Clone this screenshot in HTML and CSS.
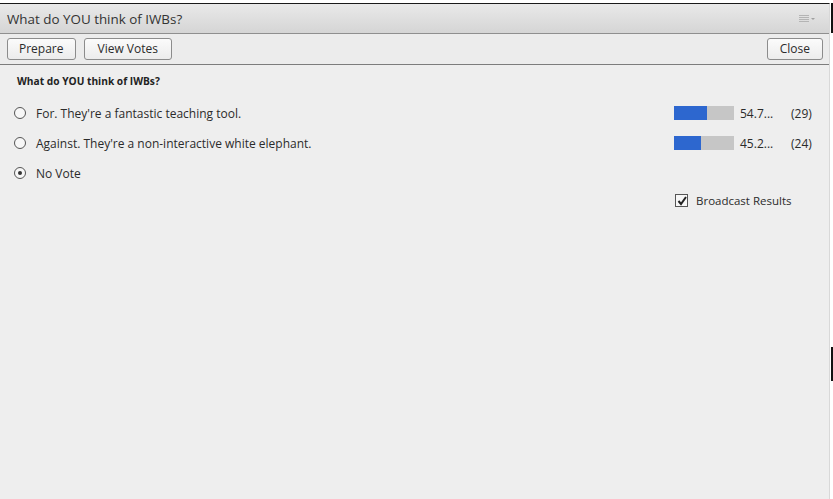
FILE: index.html
```html
<!DOCTYPE html>
<html>
<head>
<meta charset="utf-8">
<link rel="stylesheet" href="styles.css">
</head>
<body>
<div class="topstrip"></div>
<div class="panel">
  <div class="titlebar">
    <span class="title">What do YOU think of IWBs?</span>
    <svg class="menu" width="16" height="8" viewBox="0 0 16 8">
      <rect x="0" y="0" width="10" height="1" fill="#b4b4b4"/>
      <rect x="0" y="2" width="10" height="1" fill="#b4b4b4"/>
      <rect x="0" y="4" width="10" height="1" fill="#b4b4b4"/>
      <rect x="0" y="6" width="10" height="1" fill="#b4b4b4"/>
      <path d="M12 3 L16 3 L14 5 Z" fill="#a0a0a0"/>
    </svg>
  </div>
  <div class="toolbar">
    <div class="group">
      <button class="btn">Prepare</button>
      <button class="btn wide">View Votes</button>
    </div>
    <button class="btn close">Close</button>
  </div>
  <div class="content">
    <div class="question">What do YOU think of IWBs?</div>
    <div class="options">
      <div class="option">
        <span class="radio"></span>
        <span class="label">For. They're a fantastic teaching tool.</span>
        <div class="result">
          <div class="bar"><div class="fill" style="width:54.7%"></div></div>
          <span class="pct">54.7...</span>
          <span class="count">(29)</span>
        </div>
      </div>
      <div class="option">
        <span class="radio"></span>
        <span class="label">Against. They're a non-interactive white elephant.</span>
        <div class="result">
          <div class="bar"><div class="fill" style="width:45.2%"></div></div>
          <span class="pct">45.2...</span>
          <span class="count">(24)</span>
        </div>
      </div>
      <div class="option">
        <span class="radio checked"></span>
        <span class="label">No Vote</span>
      </div>
    </div>
    <div class="broadcast">
      <span class="checkbox">
        <svg width="10" height="10" viewBox="0 0 10 10"><path d="M1.5 5 L4 8 L9 1" fill="none" stroke="#222" stroke-width="2"/></svg>
      </span>
      <span class="blabel">Broadcast Results</span>
    </div>
  </div>
  <div class="edge edge-top"></div>
  <div class="edge edge-mid"></div>
</div>
</body>
</html>
```
FILE: styles.css
```css
html, body {
  margin: 0;
  padding: 0;
  background: #ffffff;
  height: 100%;
  overflow: hidden;
}
body {
  font-family: "Open Sans", "Noto Sans", sans-serif;
  color: #2b2b2b;
}
.topstrip {
  height: 3px;
  background: #ffffff;
}
.panel {
  position: relative;
  width: 829px;
  height: 496px;
  border-top: 1px solid #1a1a1a;
  border-right: 1px solid #d8d8d8;
  background: #eeeeee;
  display: flex;
  flex-direction: column;
}
.titlebar {
  height: 29px;
  display: flex;
  align-items: center;
  justify-content: space-between;
  padding: 0 14px 0 7px;
  background: linear-gradient(#e9e9e9, #d5d5d5);
  border-bottom: 1px solid #8f8f8f;
}
.title {
  font-size: 13.4px;
  color: #333;
}
.menu {
  margin-top: 1px;
}
.toolbar {
  height: 30px;
  display: flex;
  align-items: center;
  justify-content: space-between;
  padding: 0 6px 0 7px;
  background: #ececec;
  border-bottom: 1px solid #7c7c7c;
}
.group {
  display: flex;
  gap: 8px;
}
.btn {
  height: 22px;
  padding: 0 11px;
  font-family: inherit;
  font-size: 12px;
  color: #2b2b2b;
  background: linear-gradient(#fbfbfb, #ececec);
  border: 1px solid #8c8c8c;
  border-radius: 3px;
  line-height: 20px;
}
.btn.wide {
  padding: 0 13px;
}
.btn.close {
  padding: 0 12px;
}
.content {
  flex: 1;
  padding: 8px 0 0 0;
  background: #eeeeee;
}
.question {
  padding-left: 17px;
  font-size: 10.2px;
  font-weight: bold;
  color: #222;
  height: 16px;
  line-height: 16px;
}
.options {
  margin-top: 9px;
  display: flex;
  flex-direction: column;
}
.option {
  height: 30px;
  display: flex;
  align-items: center;
  padding-left: 14px;
  position: relative;
}
.radio {
  width: 10px;
  height: 10px;
  border: 1px solid #555;
  border-radius: 50%;
  background: #f7f7f7;
  box-sizing: content-box;
  position: relative;
}
.radio.checked::after {
  content: "";
  position: absolute;
  left: 3px;
  top: 3px;
  width: 4px;
  height: 4px;
  border-radius: 50%;
  background: #333;
}
.label {
  margin-left: 10px;
  font-size: 12px;
  color: #2b2b2b;
}
.result {
  margin-left: auto;
  display: flex;
  align-items: center;
  width: 147px;
  padding-right: 8px;
}
.bar {
  width: 60px;
  height: 14px;
  background: #c6c6c6;
  display: flex;
}
.fill {
  background: #2d67cf;
  height: 100%;
}
.pct {
  margin-left: 6px;
  font-size: 12px;
  width: 51px;
}
.count {
  font-size: 12px;
}
.broadcast {
  margin-top: 5px;
  display: flex;
  align-items: center;
  padding-left: 675px;
}
.checkbox {
  width: 11px;
  height: 11px;
  border: 1px solid #555;
  background: #f7f7f7;
  display: flex;
  align-items: center;
  justify-content: center;
}
.blabel {
  margin-left: 8px;
  font-size: 11.5px;
  color: #2b2b2b;
}
.edge {
  position: absolute;
  right: -4px;
  width: 2px;
  background: #111;
}
.edge-top {
  top: -1px;
  height: 30px;
}
.edge-mid {
  top: 343px;
  height: 34px;
}
```
